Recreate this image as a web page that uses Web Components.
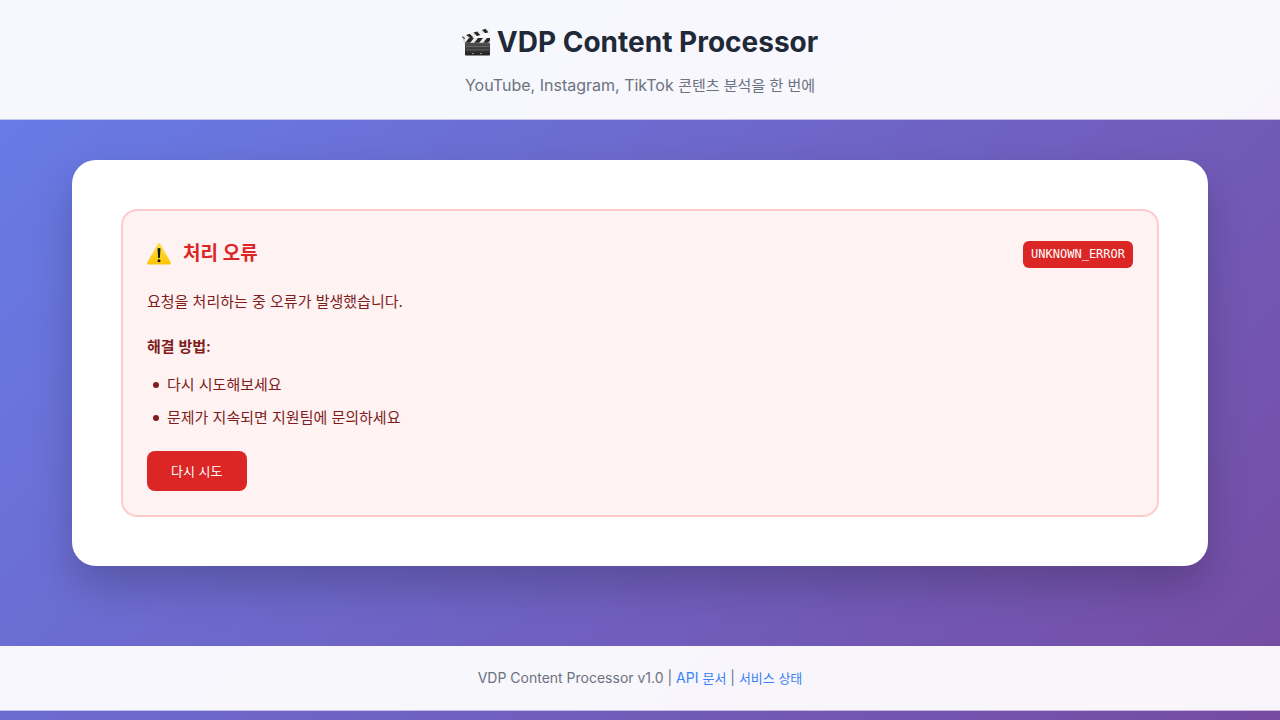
<!DOCTYPE html>
<html lang="ko">
<head>
<meta charset="utf-8">
<meta name="viewport" content="width=device-width, initial-scale=1">
<title>VDP Content Processor</title>
<style>
  body {
    margin: 0;
    min-height: 100vh;
    background: linear-gradient(135deg, #667eea 0%, #764ba2 100%);
    font: 16px/26px Inter, "Noto Sans CJK KR", sans-serif;
    color: #1f2937;
  }
</style>
</head>
<body>
<vdp-app></vdp-app>

<template id="app-template">
  <style>
    :host { display: block; }
    main { padding: 40px 72px 80px; }
    .ko { font-size: 15px; }
  </style>
  <vdp-header>
    <span slot="title">VDP Content Processor</span>
    <span slot="subtitle">YouTube, Instagram, TikTok <span class="ko">콘텐츠 분석을 한 번에</span></span>
  </vdp-header>
  <main>
    <vdp-card>
      <vdp-error code="UNKNOWN_ERROR">
        <span slot="title">처리 오류</span>
        <span slot="message">요청을 처리하는 중 오류가 발생했습니다.</span>
        <span slot="help">해결 방법:</span>
        <span slot="first">다시 시도해보세요</span>
        <span slot="second">문제가 지속되면 지원팀에 문의하세요</span>
        <span slot="action">다시 시도</span>
      </vdp-error>
    </vdp-card>
  </main>
  <vdp-footer>VDP Content Processor v1.0</vdp-footer>
</template>

<template id="header-template">
  <style>
    :host { display: block; }
    header {
      padding: 20px;
      text-align: center;
      background: rgba(255, 255, 255, .95) padding-box;
      border-bottom: 1px solid rgba(255, 255, 255, .6);
    }
    h1 {
      display: flex;
      justify-content: center;
      align-items: center;
      gap: 7px;
      margin: 0 0 8px;
      font-size: 28px;
      line-height: 44px;
      font-weight: 700;
    }
    p { margin: 0; color: #6b7280; }
  </style>
  <header>
    <h1>
      <svg width="28" height="28" viewBox="0 0 28 28" aria-hidden="true">
        <defs>
          <linearGradient id="slate" x1="0" y1="0" x2="0" y2="1">
            <stop offset="0" stop-color="#565656"/><stop offset="1" stop-color="#202020"/>
          </linearGradient>
          <clipPath id="arm"><path d="M0 8.2 26 0l1.2 3.9L2 12.5z"/></clipPath>
          <clipPath id="bar"><path d="M3 10h25v4.800H3z"/></clipPath>
        </defs>
        <g clip-path="url(#arm)">
          <path fill="#ececec" d="M0 0h28v14H0z"/>
          <path fill="#292929" d="m3 6 5 4h4L7 5zm7-3 5 5h4l-5-6zm8-3 5 5h4l-5-6zM0 8l3 2v4H0z"/>
        </g>
        <path fill="#d4d4d4" d="m1 10 5 2-3 3H2z"/>
        <path fill="url(#slate)" d="M3 14h25v12.500q0 1-1 1H4q-1 0-1-1z"/>
        <g clip-path="url(#bar)">
          <path fill="#ececec" d="M3 10h25v5H3z"/>
          <path fill="#292929" d="m7 10-4 5h5l4-5zm9 0-4 5h5l4-5zm9 0-4 5h5l4-5z"/>
        </g>
        <path stroke="#8a8a8a" stroke-width=".5" d="M4 18.500h23M4 22h23"/>
        <path stroke="#ccc" stroke-width=".6" d="M10 25.500h2m6 0h2"/>
      </svg>
      <slot name="title"></slot>
    </h1>
    <p><slot name="subtitle"></slot></p>
  </header>
</template>

<template id="card-template">
  <style>
    :host {
      display: block;
      padding: 49px;
      border-radius: 24px;
      background: #fff;
      box-shadow: 0 20px 40px rgba(0, 0, 0, .2);
    }
  </style>
  <slot></slot>
</template>

<template id="error-template">
  <style>
    :host {
      display: block;
      padding: 24px;
      border: 2px solid #fecaca;
      border-radius: 16px;
      background: #fef2f2;
      color: #7f1d1d;
      font-size: 15px;
    }
    .head { display: flex; align-items: center; gap: 12px; margin-bottom: 16px; line-height: 38px; }
    h2 { flex: 1; margin: 0; font-size: 19px; font-weight: 600; color: #dc2626; }
    code {
      padding: 4px 8px;
      border-radius: 6px;
      background: #dc2626;
      color: #fff;
      font: 12px/19px "DejaVu Sans Mono", monospace;
    }
    p { margin: 0 0 20px; line-height: 25px; }
    h3 { margin: 0 0 12px; font-size: 15px; font-weight: 600; }
    ul { margin: 0 0 20px; padding: 0 0 0 6px; list-style: none; display: grid; gap: 7px; }
    li { display: flex; align-items: center; gap: 8px; }
    li::before { content: ""; width: 6px; height: 6px; border-radius: 50%; background: currentColor; }
    button {
      display: block;
      padding: 10px 24px;
      border: 0;
      border-radius: 8px;
      background: #dc2626;
      color: #fff;
      font: 400 13px/20px Inter, "Noto Sans CJK KR", sans-serif;
      cursor: pointer;
    }
  </style>
  <div class="head">
    <svg width="24" height="24" viewBox="0 0 24 24" aria-hidden="true">
      <defs>
        <linearGradient id="sun" x1="0" y1="0" x2="0" y2="1">
          <stop offset="0" stop-color="#ffe04d"/><stop offset="1" stop-color="#ffc400"/>
        </linearGradient>
      </defs>
      <path fill="url(#sun)" d="M10.800 1.800q1.200-1.600 2.400 0l10.600 18.800q.6 1.600-1.200 1.900H1.400q-1.800-.3-1.200-1.900z"/>
      <path fill="#111" d="M10.500 6.500q1.500-.8 3 0l-.6 9.200q-.9.6-1.800 0z"/>
      <circle cx="12" cy="18.800" r="1.500" fill="#111"/>
    </svg>
    <h2><slot name="title"></slot></h2>
    <code></code>
  </div>
  <p><slot name="message"></slot></p>
  <h3><slot name="help"></slot></h3>
  <ul>
    <li><slot name="first"></slot></li>
    <li><slot name="second"></slot></li>
  </ul>
  <button type="button"><slot name="action"></slot></button>
</template>

<template id="footer-template">
  <style>
    :host { display: block; }
    footer {
      padding: 20px;
      text-align: center;
      font-size: 14px;
      line-height: 23px;
      color: #6b7280;
      background: rgba(255, 255, 255, .95) padding-box;
      border-bottom: 1px solid rgba(255, 255, 255, .6);
    }
    a { color: #3b82f6; text-decoration: none; }
    .ko { font-size: 13px; }
  </style>
  <footer><slot></slot> | <a href="#docs">API <span class="ko">문서</span></a> | <a class="ko" href="#status">서비스 상태</a></footer>
</template>

<script>
  class TemplateElement extends HTMLElement {
    constructor() {
      super();
      const template = document.getElementById(this.constructor.template);
      this.attachShadow({ mode: "open" }).append(template.content.cloneNode(true));
    }
  }
  class VdpHeader extends TemplateElement { static template = "header-template"; }
  class VdpCard extends TemplateElement { static template = "card-template"; }
  class VdpFooter extends TemplateElement { static template = "footer-template"; }
  class VdpApp extends TemplateElement { static template = "app-template"; }
  class VdpError extends TemplateElement {
    static template = "error-template";
    connectedCallback() {
      this.shadowRoot.querySelector("code").textContent = this.getAttribute("code");
    }
  }
  customElements.define("vdp-header", VdpHeader);
  customElements.define("vdp-card", VdpCard);
  customElements.define("vdp-error", VdpError);
  customElements.define("vdp-footer", VdpFooter);
  customElements.define("vdp-app", VdpApp);
</script>
</body>
</html>
